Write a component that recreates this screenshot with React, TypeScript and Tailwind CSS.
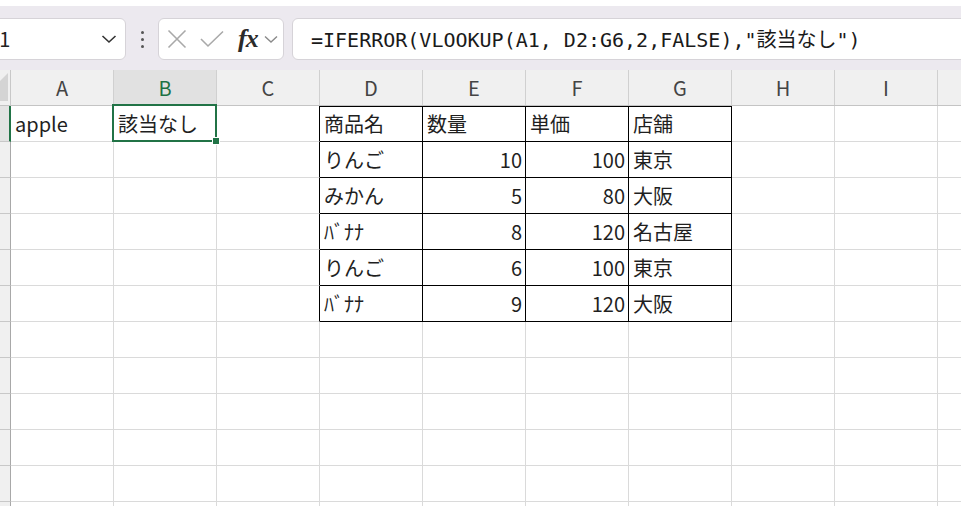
import React from "react";

const COLS = ["A", "B", "C", "D", "E", "F", "G", "H", "I", "J"];

type Cell = { t: string; r?: boolean };
const data: Record<number, Record<string, Cell>> = {
  1: { A: { t: "apple" }, B: { t: "該当なし" }, D: { t: "商品名" }, E: { t: "数量" }, F: { t: "単価" }, G: { t: "店舗" } },
  2: { D: { t: "りんご" }, E: { t: "10", r: true }, F: { t: "100", r: true }, G: { t: "東京" } },
  3: { D: { t: "みかん" }, E: { t: "5", r: true }, F: { t: "80", r: true }, G: { t: "大阪" } },
  4: { D: { t: "ﾊﾞﾅﾅ" }, E: { t: "8", r: true }, F: { t: "120", r: true }, G: { t: "名古屋" } },
  5: { D: { t: "りんご" }, E: { t: "6", r: true }, F: { t: "100", r: true }, G: { t: "東京" } },
  6: { D: { t: "ﾊﾞﾅﾅ" }, E: { t: "9", r: true }, F: { t: "120", r: true }, G: { t: "大阪" } },
};

const inTable = (row: number, col: string) => row >= 1 && row <= 6 && ["D", "E", "F", "G"].includes(col);

export default function App() {
  const rows = Array.from({ length: 12 }, (_, i) => i + 1);
  return (
    <div
      className="relative w-[961px] h-[506px] overflow-hidden bg-white text-[#1f1f1f]"
      style={{ fontFamily: '"Noto Sans CJK JP", "Noto Sans", sans-serif' }}
    >
      {/* Toolbar */}
      <div className="h-[6px] bg-white" />
      <div className="h-[64px] bg-[#ece9ef] flex items-start pt-[12px]">
        {/* Name box */}
        <div className="ml-[-40px] w-[166px] h-[42px] bg-white border border-[#d6d3d8] rounded-[6px] flex items-center justify-between pl-[26px] pr-[7px] shrink-0">
          <span className="text-[20px] leading-none text-[#222]">A1</span>
          <svg width="16" height="10" viewBox="0 0 16 10" className="mr-[1px]">
            <path d="M1.5 2 L8 8 L14.5 2" fill="none" stroke="#333" strokeWidth="1.6" />
          </svg>
        </div>
        {/* dots */}
        <div className="w-[32px] h-[42px] flex flex-col items-center justify-center gap-[4px] shrink-0">
          <span className="block w-[3px] h-[3px] rounded-full bg-[#555]" />
          <span className="block w-[3px] h-[3px] rounded-full bg-[#555]" />
          <span className="block w-[3px] h-[3px] rounded-full bg-[#555]" />
        </div>
        {/* fx box */}
        <div className="w-[126px] h-[42px] bg-white border border-[#d6d3d8] rounded-[6px] flex items-center pl-[8px] shrink-0">
          <svg width="20" height="20" viewBox="0 0 20 20">
            <path d="M1.5 1.5 L18.5 18.5 M18.5 1.5 L1.5 18.5" stroke="#a9a9a9" strokeWidth="1.6" fill="none" />
          </svg>
          <svg width="24" height="18" viewBox="0 0 24 18" className="ml-[13px]">
            <path d="M1 9 L8 16 L23 1.5" stroke="#a9a9a9" strokeWidth="1.6" fill="none" />
          </svg>
          <span
            className="ml-[14px] text-[26px] leading-none italic text-[#2b2b2b] tracking-[-1px]"
            style={{ fontFamily: '"Liberation Serif", "DejaVu Serif", serif', fontWeight: 600 }}
          >
            fx
          </span>
          <svg width="14" height="8" viewBox="0 0 14 8" className="ml-[6px]">
            <path d="M1 1.5 L7 7 L13 1.5" fill="none" stroke="#8a8a8a" strokeWidth="1.4" />
          </svg>
        </div>
        {/* formula box */}
        <div className="ml-[8px] w-[720px] h-[42px] bg-white border border-[#d6d3d8] rounded-[6px] flex items-center pl-[18px] shrink-0">
          <span
            className="text-[20px] leading-none text-[#1a1a1a] whitespace-pre"
            style={{ fontFamily: '"DejaVu Sans Mono", "Noto Sans CJK JP", monospace' }}
          >
            =IFERROR(VLOOKUP(A1, D2:G6,2,FALSE),"
            <span style={{ fontFamily: '"Noto Sans CJK JP", sans-serif' }}>該当なし</span>")
          </span>
        </div>
      </div>

      {/* Column headers */}
      <div className="flex h-[36px] bg-[#f0f0f0] border-b border-[#c4c4c4]">
        <div className="w-[11px] shrink-0 border-r border-[#c8c8c8] relative overflow-hidden">
          <svg width="10" height="35" viewBox="0 0 10 35" className="absolute left-0 top-0">
            <polygon points="8,3 8,31 -20,31" fill="#d4d4d4" />
          </svg>
        </div>
        {COLS.map((c) => (
          <div
            key={c}
            className={
              "w-[103px] shrink-0 border-r border-[#d0d0d0] flex items-center justify-center text-[20px] leading-none " +
              (c === "B" ? "bg-[#e1e1e1] text-[#1e7145]" : "text-[#444]")
            }
          >
            {c === "J" ? "" : c}
          </div>
        ))}
      </div>

      {/* Rows */}
      {rows.map((row) => (
        <div key={row} className="flex h-[36px]">
          <div
            className={
              "w-[11px] shrink-0 border-b border-[#c8c8c8] " +
              (row === 1 ? "bg-[#e3e3e3] border-r-2 border-r-[#217346]" : "bg-[#f0f0f0] border-r border-r-[#a8a8a8]")
            }
          />
          {COLS.map((c) => {
            const cell = data[row]?.[c];
            const tbl = inTable(row, c);
            const leftOfTable = c === "C" && row >= 1 && row <= 6;
            const borderR = tbl || leftOfTable ? "border-r-[#000]" : "border-r-[#dadada]";
            const borderB = tbl ? "border-b-[#000]" : "border-b-[#dadada]";
            const top = tbl && row === 1 ? "shadow-[inset_0_1px_0_#000]" : "";
            return (
              <div
                key={c}
                className={
                  "w-[103px] shrink-0 border-r border-b flex items-center text-[20px] leading-[36px] whitespace-nowrap overflow-visible " +
                  borderR +
                  " " +
                  borderB +
                  " " +
                  top +
                  " " +
                  (cell?.r ? "justify-end pr-[3px]" : "justify-start pl-[4px]")
                }
              >
                {cell?.t ?? ""}
              </div>
            );
          })}
        </div>
      ))}

      {/* Selection B1 */}
      <div className="absolute left-[112px] top-[104px] w-[105px] h-[38px] border-2 border-[#217346] pointer-events-none" />
      <div className="absolute left-[212px] top-[137px] w-[8px] h-[8px] bg-[#217346] border border-white pointer-events-none" />
    </div>
  );
}
